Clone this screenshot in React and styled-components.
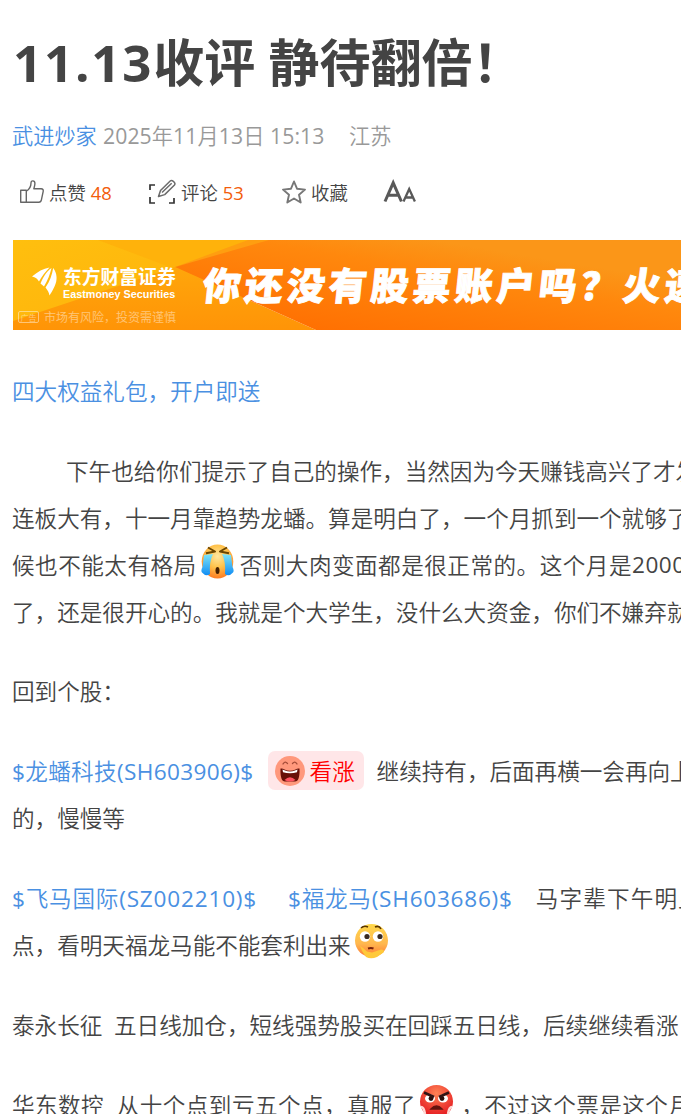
import React from 'react'
import styled, { createGlobalStyle } from 'styled-components'

const GlobalStyle = createGlobalStyle`
  * {
    box-sizing: border-box;
  }
  body {
    margin: 0;
    background: #fff;
    overflow: hidden;
    font-family: "Open Sans", "Noto Sans CJK SC", sans-serif;
    font-weight: 350;
    color: #444;
  }
`

const Page = styled.main`
  width: 100%;
  height: 1114px;
  padding: 26px 0 0 13px;
  overflow: hidden;
`

const Title = styled.h1`
  margin: 0;
  height: 72px;
  line-height: 72px;
  font-size: 51px;
  font-weight: 700;
  white-space: pre;
`

const TitleNumber = styled.span`
  letter-spacing: 1.8px;
`

// digits and latin letters keep the regular weight
const Latin = styled.span`
  font-weight: 400;
`

const Meta = styled.div`
  display: flex;
  align-items: center;
  height: 30px;
  margin: 21px 0 0 -1px;
  font-size: 21.2px;
  color: #999;
  white-space: pre;
`

const Author = styled.a`
  width: 91px;
  color: #4a90e2;
`

const Stamp = styled.span`
  width: 221px;
  letter-spacing: 0.08px;
`

const Place = styled.span`
  margin-left: 25px;
`

const Toolbar = styled.div`
  display: flex;
  height: 30px;
  margin-top: 28px;
  padding-left: 6px;
`

const Tool = styled.div`
  display: flex;
  align-items: center;
  width: ${props => props.$width}px;
  font-size: 18.4px;
  white-space: pre;
  svg {
    flex: none;
    margin-right: ${props => props.$gap}px;
  }
`

const Count = styled(Latin)`
  margin-left: 5px;
  color: #f35d0b;
`

const Banner = styled.div`
  display: flex;
  position: relative;
  height: 90px;
  margin-top: 33px;
  overflow: hidden;
  color: #fff;
`

const BannerArt = styled.svg`
  position: absolute;
  inset: 0;
`

const Brand = styled.div`
  position: relative;
  flex: none;
  width: 190px;
  padding: 25px 0 0 18px;
`

const BrandRow = styled.div`
  display: flex;
  height: 36px;
`

const BrandText = styled.div`
  margin-left: 5px;
  white-space: nowrap;
`

const BrandName = styled.div`
  height: 23px;
  line-height: 22px;
  font-family: "Noto Sans CJK SC", sans-serif;
  font-size: 18.8px;
  font-weight: 700;
`

const BrandEnglish = styled.div`
  line-height: 12px;
  font-family: "Liberation Sans", sans-serif;
  font-size: 10.8px;
  font-weight: 700;
`

const Risk = styled.div`
  display: flex;
  align-items: center;
  height: 16px;
  margin: 8px 0 0 -13px;
  font-size: 12px;
  white-space: nowrap;
  opacity: 0.45;
`

const AdTag = styled.span`
  display: flex;
  align-items: center;
  justify-content: center;
  width: 21px;
  height: 12px;
  margin-right: 5px;
  border: 1.5px solid #fff;
  border-radius: 2px;
  font-size: 8px;
`

const Slogan = styled.div`
  position: relative;
  line-height: 87px;
  font-family: "Noto Sans CJK SC", sans-serif;
  font-size: 38px;
  font-weight: 900;
  letter-spacing: 4px;
  white-space: nowrap;
  transform: skewX(-6deg);
  -webkit-text-stroke: 0.9px #fff;
`

const Article = styled.article`
  margin-left: -1px;
  padding-top: 37.4px;
  font-size: 22.58px;
`

const Paragraph = styled.div`
  margin-bottom: 33.1px;
`

const Line = styled.div`
  display: flex;
  align-items: center;
  height: 46.8px;
  padding-left: ${props => props.$indent || 0}px;
  letter-spacing: ${props => props.$spacing || 0}px;
  white-space: pre;
  > * {
    flex: none;
  }
`

const Link = styled.a`
  color: #4a90e2;
  margin-right: ${props => props.$gap || 0}px;
  letter-spacing: ${props => props.$spacing || 0}px;
`

const Face = styled.svg`
  width: 35px;
  height: 38px;
  margin: 0 ${props => props.$right || 5}px 6px 3px;
`

const Rise = styled.span`
  display: flex;
  align-items: center;
  width: 96px;
  height: 39px;
  margin-right: 13px;
  padding-left: 7px;
  border-radius: 7px;
  background: #ffe6e8;
  color: #f00;
  svg {
    margin-right: 5px;
  }
`

const ThumbIcon = () => (
  <svg width="26" height="26" viewBox="0 0 26 26" fill="none" stroke="#666" strokeWidth="1.4" strokeLinejoin="round">
    <path d="M1.700 11.200h5.600v12H1.700zM7.300 12.200c3-1.800 4.700-4 4.700-8.200 0-3 3.800-2.800 3.900.3.1 2.200-.7 4-1.100 5.500h7.400c1.600 0 2.300 1 2 2.500l-1.800 8.500c-.3 1.600-1 2.400-2.600 2.400H7.300" />
  </svg>
)

const CommentIcon = () => (
  <svg width="28" height="26" viewBox="0 0 28 26" fill="none">
    <path d="M7 6H2v5M2 18v6h5M21 24h5v-5" stroke="#333" strokeWidth="1.7" />
    <path d="M10.500 17.500l2-6L22.200 2c1.700-1.600 6 1.900 4.300 4l-9.800 9.600zM14 13.500l9.700-9.300" stroke="#6b6b6b" strokeWidth="1.5" strokeLinejoin="round" />
  </svg>
)

const StarIcon = () => (
  <svg width="26" height="26" viewBox="0 0 26 26" fill="none" stroke="#777" strokeWidth="1.9" strokeLinejoin="round">
    <path d="M13 2.500l3 7.200 8 .9-6 5.200 1.700 7.700-6.700-4-6.700 4L8 15.800 2 10.600l8-.9z" />
  </svg>
)

const FontSizeIcon = () => (
  <svg width="34" height="26" viewBox="0 0 34 26" fill="none" stroke="#595959">
    <path d="M2 22.500L10.200 3.800 18.400 22.500M5 16.200h10.400" strokeWidth="3" />
    <path d="M20.500 22.500L26.200 10l5.700 12.500M22.600 18.500h7.200" strokeWidth="2.300" />
  </svg>
)

const BrandLogo = () => (
  <svg width="27" height="34" viewBox="0 0 27 34" fill="#fff">
    <path d="M1 11.500C7 6.500 12 3.500 18.500 2.500 14 7 11 11.500 8 16.500c-1.500-2.500-3.500-4.500-7-5z" />
    <path d="M9.500 18.500c2.500-6 5.500-11.500 11-15.500-1.500 6.500-4 12.500-7.500 18.500z" />
    <path d="M14.500 22.500c4.500-6.300 6.500-12.500 7.700-19.500 4 5.500 4.500 12 1.300 18.500-1.600 3.500-3.400 6.500-5 9-.5-3-2-5.500-4-8z" />
  </svg>
)

const LaughIcon = () => (
  <svg width="30" height="30" viewBox="0 0 30 30">
    <circle cx="15" cy="15" r="15" fill="#ff987c" />
    <path d="M8 8q2-3.500 4.500-.5M17.500 7.500q2.500-3 4.500.5" fill="none" stroke="#a44b38" strokeWidth="1.3" strokeLinecap="round" />
    <path d="M5.500 12.500q2-.5 4 1 5.500 2.500 11 0 2-1.500 4-1 .5 13-4.500 13H10q-5 0-4.500-13z" fill="#671008" />
    <path d="M7.500 13.500l2.500 1.100q5 2 10 0l2.500-1.100-.5 2.700q-7 2.300-14 0z" fill="#fff" />
    <path d="M9.500 24q5.500-5.500 11 0-5.500 3-11 0z" fill="#ff5260" />
  </svg>
)

const CryFace = () => (
  <Face viewBox="0 0 35 38">
    <defs>
      <radialGradient id="cry" cx=".5" cy=".35" r=".65">
        <stop offset="0" stopColor="#ffe7a0" />
        <stop offset=".5" stopColor="#ffc34c" />
        <stop offset="1" stopColor="#ff7d22" />
      </radialGradient>
      <linearGradient id="tear" x2="0" y2="1">
        <stop offset="0" stopColor="#7fe5f8" />
        <stop offset="1" stopColor="#118df3" />
      </linearGradient>
    </defs>
    <ellipse cx="17.500" cy="19.500" rx="15.800" ry="17" fill="url(#cry)" />
    <path d="M4 13l9-1q-4 8-3 20-4 3-8-1.500-1.500-1.500.5-5.500z" fill="url(#tear)" />
    <path d="M31 13l-9-1q4 8 3 20 4 3 8-1.500 1.500-1.500-.5-5.500z" fill="url(#tear)" />
    <path d="M8 5.500l7 4-9 1.800M27 5.500l-7 4 9 1.800" fill="none" stroke="#6b4500" strokeWidth="2" strokeLinejoin="round" />
    <ellipse cx="17.500" cy="28.500" rx="2" ry="3.500" fill="#482000" />
  </Face>
)

const ThinkFace = () => (
  <Face viewBox="0 0 35 38">
    <defs>
      <linearGradient id="think" x2="0" y2="1">
        <stop offset="0" stopColor="#ffd84a" />
        <stop offset=".6" stopColor="#ffb74e" />
        <stop offset="1" stopColor="#ff7731" />
      </linearGradient>
    </defs>
    <circle cx="17.500" cy="18.500" r="16.500" fill="url(#think)" />
    <circle cx="11" cy="14.500" r="5.200" fill="#fff" />
    <circle cx="24" cy="14.500" r="5.200" fill="#fff" />
    <circle cx="13" cy="14.500" r="2.600" fill="#392b24" />
    <circle cx="26" cy="14.500" r="2.600" fill="#392b24" />
    <path d="M7 6q3-3 7-1M21 5q4-2 6 2" fill="none" stroke="#593500" strokeWidth="1.600" />
    <path d="M14 26.500q3-1 5.500 0" fill="none" stroke="#76200b" strokeWidth="2" />
    <path d="M6 24q3 1.500 7 5.500l5 1 9-3q4 0 2.500 3L23 35q-6 2.500-11 0-4-5-6-11z" fill="#ffc93a" />
  </Face>
)

const AngryFace = () => (
  <Face viewBox="0 0 35 38" $right={7}>
    <defs>
      <radialGradient id="angry" cx=".5" cy=".25" r=".7">
        <stop offset="0" stopColor="#ff8255" />
        <stop offset="1" stopColor="#e51b21" />
      </radialGradient>
    </defs>
    <circle cx="17.500" cy="19.500" r="16.500" fill="url(#angry)" />
    <ellipse cx="11" cy="16.500" rx="5" ry="4" fill="#fff" />
    <ellipse cx="24" cy="16.500" rx="5" ry="4" fill="#fff" />
    <circle cx="12" cy="16.500" r="2.400" fill="#30100d" />
    <circle cx="23" cy="16.500" r="2.400" fill="#30100d" />
    <path d="M5 10.500l10 4.500M30 10.500L20 15" stroke="#321414" strokeWidth="2.600" />
    <path d="M12 27q5.500-6 11 0z" fill="#64140f" stroke="#64140f" strokeWidth="1.500" />
    <path d="M2 25q3 0 4 7M33 25q-3 0-4 7" fill="none" stroke="#ffd9d4" strokeWidth="2.500" />
  </Face>
)

const App = () => {
  return (
    <>
      <GlobalStyle />
      <Page>
        <Title><TitleNumber>11.13</TitleNumber>收评 静待翻倍！</Title>
        <Meta>
          <Author>武进炒家</Author>
          <Stamp>
            <Latin>2025</Latin>年<Latin>11</Latin>月<Latin>13</Latin>日<Latin> 15:13</Latin>
          </Stamp>
          <Place>江苏</Place>
        </Meta>
        <Toolbar>
          <Tool $width={129} $gap={4}><ThumbIcon />点赞<Count>48</Count></Tool>
          <Tool $width={133} $gap={5}><CommentIcon />评论<Count>53</Count></Tool>
          <Tool $width={102} $gap={4}><StarIcon />收藏</Tool>
          <Tool $width={40} $gap={0}><FontSizeIcon /></Tool>
        </Toolbar>

        <Banner>
          <BannerArt width="668" height="90" viewBox="0 0 668 90">
            <defs>
              <linearGradient id="gold" x2="1" y2="1">
                <stop offset="0" stopColor="#ffbf0e" />
                <stop offset="1" stopColor="#ffb00c" />
              </linearGradient>
              <linearGradient id="low" x2="0" y2="1">
                <stop offset="0" stopColor="#ffa60b" />
                <stop offset="1" stopColor="#ff9407" />
              </linearGradient>
              <linearGradient id="orange" gradientUnits="userSpaceOnUse" x1="280" y1="100" x2="300" y2="-20">
                <stop offset="0" stopColor="#ff6c00" />
                <stop offset="0.75" stopColor="#ff880d" />
                <stop offset="1.000" stopColor="#fb9618" />
              </linearGradient>
            </defs>
            <path d="M0 0h235v90H0z" fill="url(#gold)" />
            <path d="M85 0h150l-73 29z" fill="#ffb20b" />
            <path d="M0 81L162 27l141 63H0z" fill="url(#low)" />
            <path d="M235 0h30L162 27z" fill="#ff9e10" />
            <path d="M256 0h412v90H303L162 27z" fill="url(#orange)" />
          </BannerArt>
          <Brand>
            <BrandRow>
              <BrandLogo />
              <BrandText>
                <BrandName>东方财富证券</BrandName>
                <BrandEnglish>Eastmoney Securities</BrandEnglish>
              </BrandText>
            </BrandRow>
            <Risk><AdTag>广告</AdTag>市场有风险，投资需谨慎</Risk>
          </Brand>
          <Slogan>你还没有股票账户吗？火速开户</Slogan>
        </Banner>

        <Article>
          <Paragraph>
            <Line><Link>四大权益礼包，开户即送</Link></Line>
          </Paragraph>
          <Paragraph>
            <Line $indent={54}>下午也给你们提示了自己的操作，当然因为今天赚钱高兴了才发</Line>
            <Line>连板大有，十一月靠趋势龙蟠。算是明白了，一个月抓到一个就够了</Line>
            <Line $spacing={0.5}>候也不能太有格局<CryFace />否则大肉变面都是很正常的。这个月是<Latin>2000</Latin></Line>
            <Line>了，还是很开心的。我就是个大学生，没什么大资金，你们不嫌弃就</Line>
          </Paragraph>
          <Paragraph>
            <Line>回到个股：</Line>
          </Paragraph>
          <Paragraph>
            <Line>
              <Link $gap={14} $spacing={0.35}><Latin>$</Latin>龙蟠科技<Latin>(SH603906)$</Latin></Link>
              <Rise><LaughIcon />看涨</Rise>
              继续持有，后面再横一会再向上
            </Line>
            <Line>的，慢慢等</Line>
          </Paragraph>
          <Paragraph>
            <Line $spacing={1.2}>
              <Link $gap={31} $spacing={0.8}><Latin>$</Latin>飞马国际<Latin>(SZ002210)$</Latin></Link>
              <Link $gap={23} $spacing={0.75}><Latin>$</Latin>福龙马<Latin>(SH603686)$</Latin></Link>
              马字辈下午明显
            </Line>
            <Line>点，看明天福龙马能不能套利出来<ThinkFace /></Line>
          </Paragraph>
          <Paragraph>
            <Line>泰永长征  五日线加仓，短线强势股买在回踩五日线，后续继续看涨</Line>
          </Paragraph>
          <Paragraph>
            <Line $spacing={0.45}>华东数控  从十个点到亏五个点，真服了<AngryFace />，不过这个票是这个月</Line>
          </Paragraph>
        </Article>
      </Page>
    </>
  )
}

export default App
